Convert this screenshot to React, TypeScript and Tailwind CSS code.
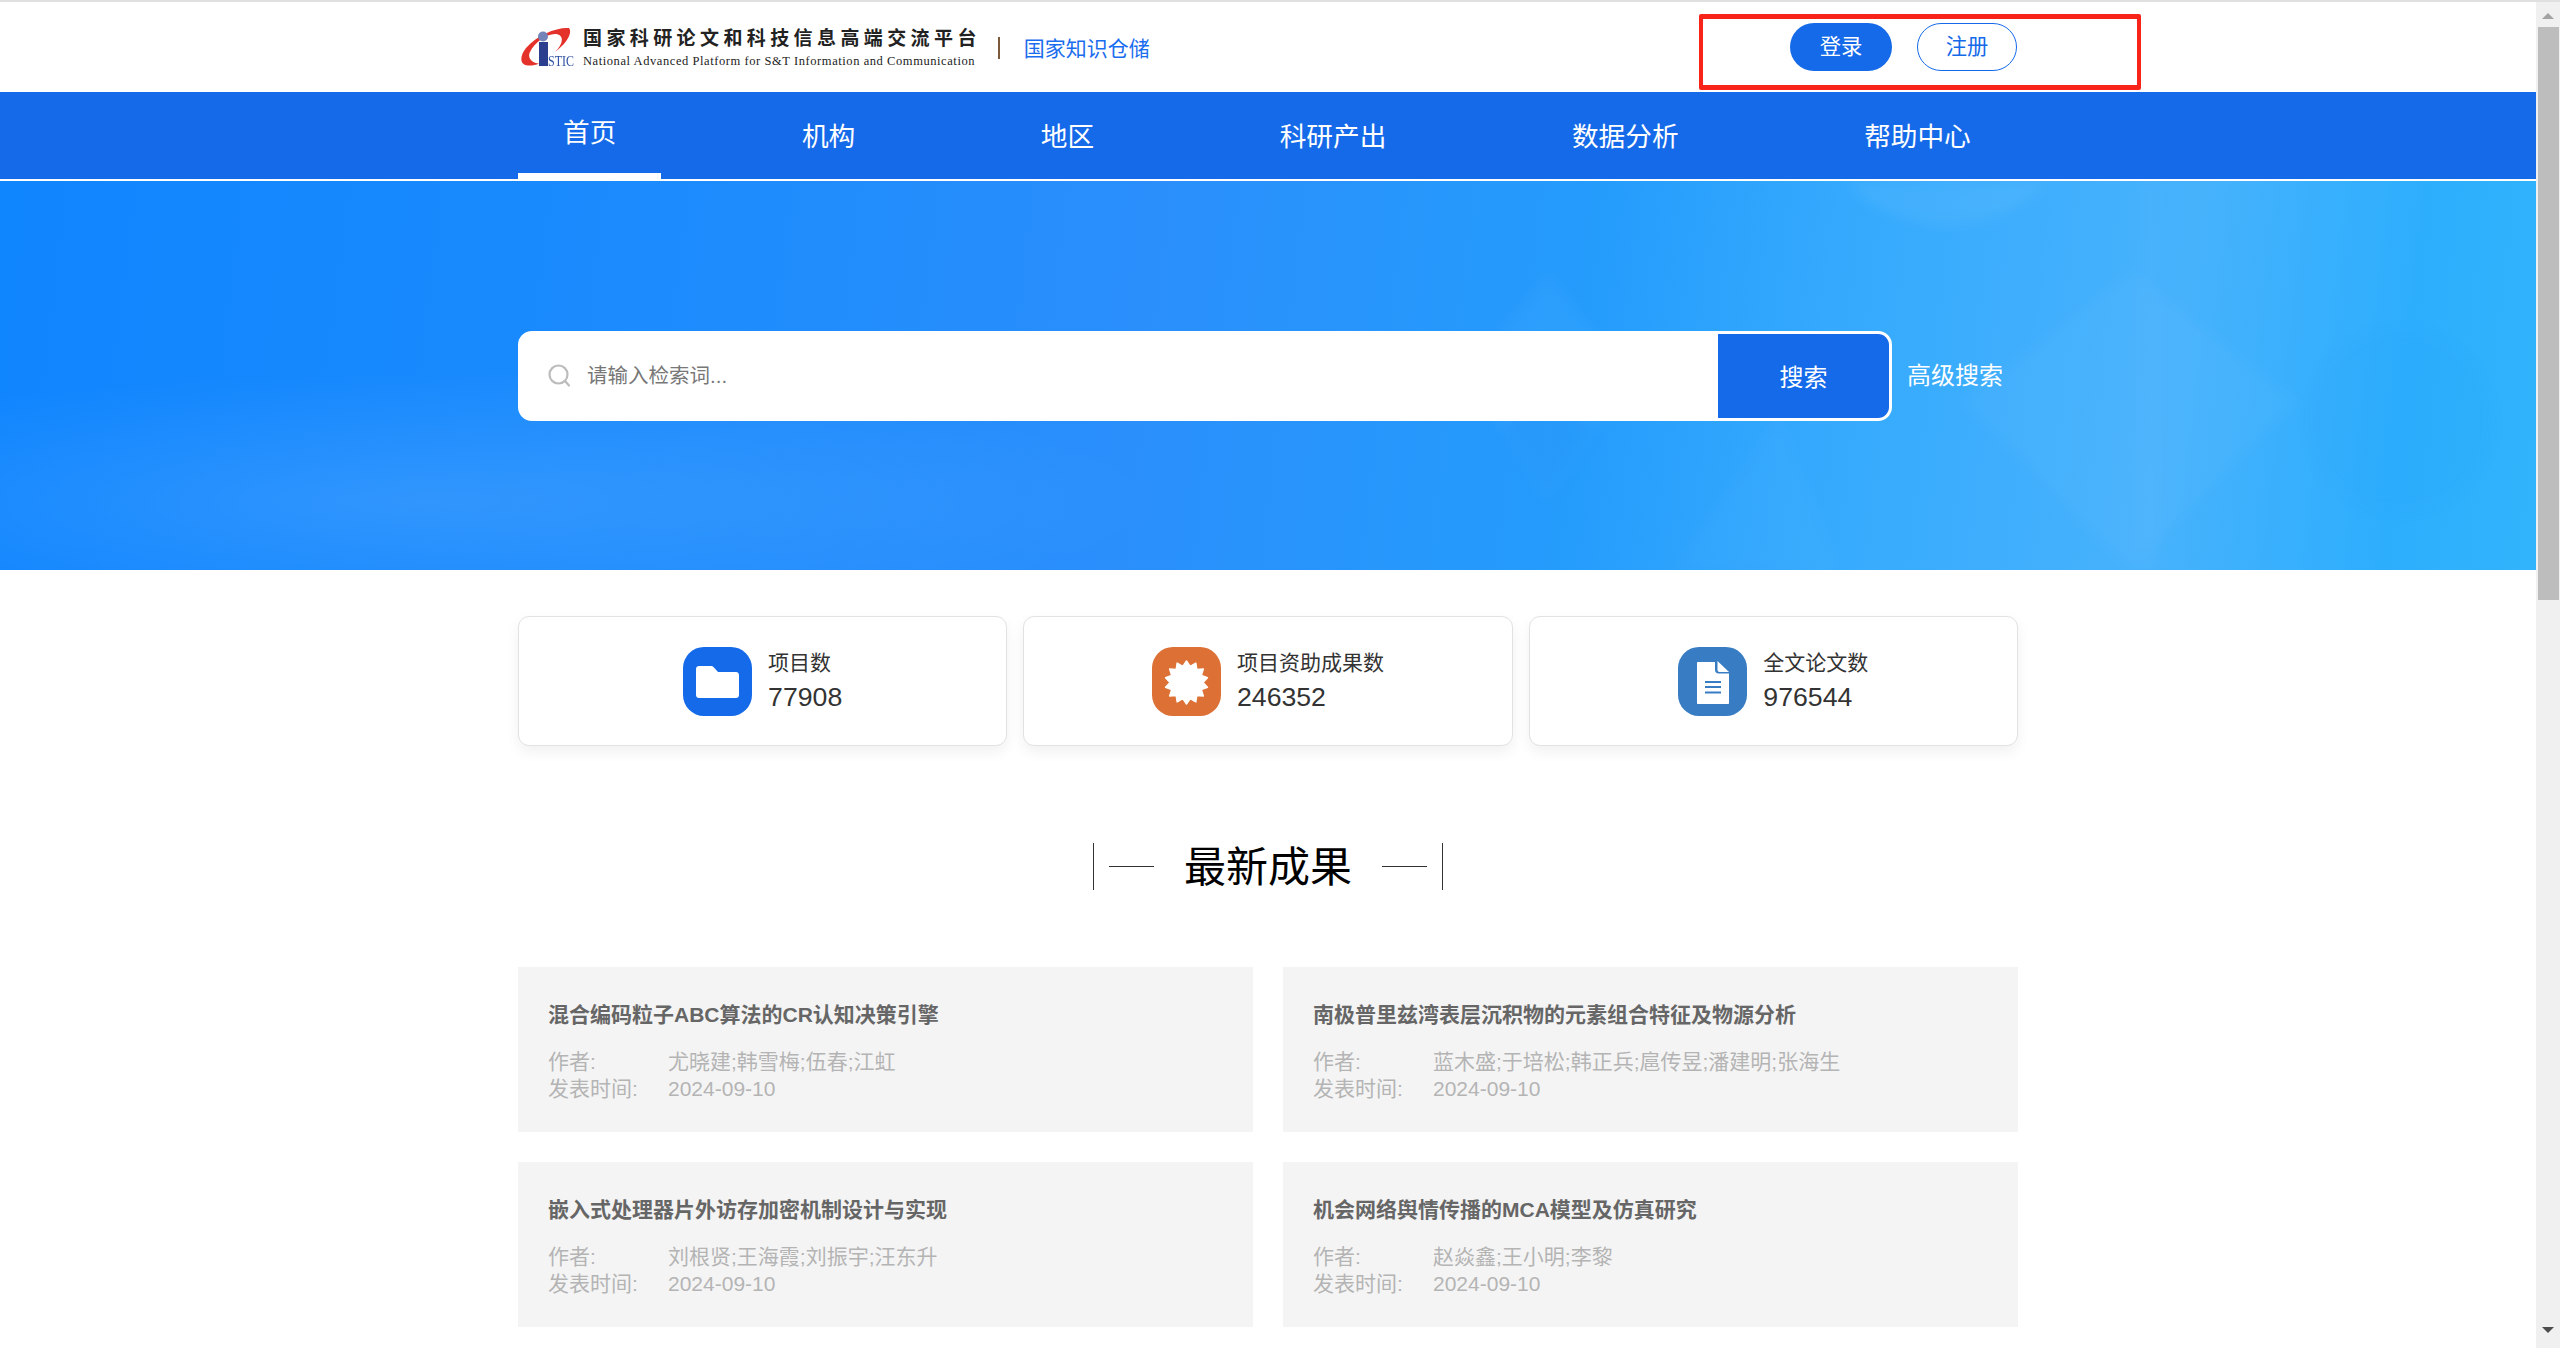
import React from "react";

const NAV = [
  { label: "首页", active: true },
  { label: "机构" },
  { label: "地区" },
  { label: "科研产出" },
  { label: "数据分析" },
  { label: "帮助中心" },
];

const RESULTS = [
  { title: "混合编码粒子ABC算法的CR认知决策引擎", authors: "尤晓建;韩雪梅;伍春;江虹" },
  { title: "南极普里兹湾表层沉积物的元素组合特征及物源分析", authors: "蓝木盛;于培松;韩正兵;扈传昱;潘建明;张海生" },
  { title: "嵌入式处理器片外访存加密机制设计与实现", authors: "刘根贤;王海霞;刘振宇;汪东升" },
  { title: "机会网络舆情传播的MCA模型及仿真研究", authors: "赵焱鑫;王小明;李黎" },
];

function sealPoints() {
  const pts: string[] = [];
  const n = 14;
  for (let i = 0; i < n * 2; i++) {
    const r = i % 2 === 0 ? 21.5 : 16.5;
    const a = (Math.PI * i) / n - Math.PI / 2;
    pts.push(`${(34.5 + r * Math.cos(a)).toFixed(2)},${(35.5 + r * Math.sin(a)).toFixed(2)}`);
  }
  return pts.join(" ");
}

function Logo() {
  return (
    <div className="relative h-[42px] w-[56px] shrink-0">
      <svg width="56" height="42" viewBox="0 0 56 42" className="block">
        <path
          d="M49 1C37 0 17 8 6 21C-1 30 0 38 8 38.500C12 38.700 16 38 19 36.500C12 36 7 31 10 25C15 15 29 5 38 7.500C44 9.500 43 17 35 25C46 17 53 6 49 1Z"
          fill="#e4322b"
        />
        <circle cx="23" cy="9.500" r="5" fill="#7484b8" />
        <rect x="19" y="15" width="9" height="24" fill="#2c3f8f" />
      </svg>
      <span className="absolute left-[28px] top-[27px] origin-left scale-x-[0.8] whitespace-nowrap font-['Liberation_Serif',serif] text-[15px] leading-[15px] text-[#2c4fa3]">
        STIC
      </span>
    </div>
  );
}

function FolderIcon() {
  return (
    <svg width="69" height="69" viewBox="0 0 69 69" className="block">
      <path
        d="M16 19H28C29 19 30 19.500 30.700 20.200L35 25H53C54.700 25 56 26.300 56 28V48C56 49.700 54.700 51 53 51H16C14.300 51 13 49.700 13 48V22C13 20.300 14.300 19 16 19Z"
        fill="#fff"
      />
    </svg>
  );
}

function SealIcon() {
  return (
    <svg width="69" height="69" viewBox="0 0 69 69" className="block">
      <polygon points={sealPoints()} fill="#fff" stroke="#fff" strokeWidth="1.500" strokeLinejoin="round" />
    </svg>
  );
}

function DocIcon() {
  return (
    <svg width="69" height="69" viewBox="0 0 69 69" className="block">
      <path d="M20 15H37V23C37 25 38.500 26.500 40.500 26.500H51V56C51 56.600 50.600 57 50 57H20C19.400 57 19 56.600 19 56V16C19 15.400 19.400 15 20 15Z" fill="#fff" />
      <path d="M39.500 14L51 25H41.500C40.400 25 39.500 24.100 39.500 23Z" fill="#fff" />
      <path d="M27 35H43M27 40H43M27 45.500H43" stroke="#387dc4" strokeWidth="2" />
    </svg>
  );
}

function Stat({ color, icon, label, value }: { color: string; icon: React.ReactNode; label: string; value: string }) {
  return (
    <div className="flex h-[130px] items-center justify-center gap-4 rounded-[11px] border border-[#e2e2e2] bg-white shadow-[0_6px_14px_rgba(0,0,0,0.06)]">
      <div className={`h-[69px] w-[69px] shrink-0 rounded-[21px] ${color}`}>{icon}</div>
      <div className="text-[#333]">
        <div className="text-[21px] leading-[30px]">{label}</div>
        <div className="mt-[1px] text-[26.67px] leading-[36px]">{value}</div>
      </div>
    </div>
  );
}

function Result({ title, authors }: { title: string; authors: string }) {
  return (
    <article className="h-[165px] bg-[#f4f4f4] px-[30px] pt-[33px]">
      <h3 className="text-[21px] font-bold leading-[30px] text-[#666]">{title}</h3>
      <dl className="mt-[18px] grid grid-cols-[120px_1fr] text-[21px] leading-[27px] text-[#b4b4b4]">
        <dt>作者:</dt>
        <dd>{authors}</dd>
        <dt>发表时间:</dt>
        <dd>2024-09-10</dd>
      </dl>
    </article>
  );
}

export default function App() {
  return (
    <div className="flex h-[1348px] flex-col overflow-hidden bg-white font-['Liberation_Sans','Noto_Sans_CJK_SC',sans-serif]">
      <div className="h-[2px] shrink-0 bg-[#e0e0e0]" />
      <div className="flex min-h-0 flex-1">
        <main className="min-w-0 flex-1">
          <header className="relative h-[90px] bg-white">
            <div className="mx-auto flex h-full w-[1500px] items-center">
              <div className="ml-[2px] mt-[2px] flex items-center gap-[7px]">
                <Logo />
                <div className="mt-[-2px]">
                  <div className="whitespace-nowrap text-[19px] font-bold leading-[24px] tracking-[4.4px] text-[#222]">
                    国家科研论文和科技信息高端交流平台
                  </div>
                  <div className="mt-[4px] whitespace-nowrap font-['Liberation_Serif',serif] text-[12.5px] font-normal leading-[13px] tracking-[0.57px] text-[#222]">
                    National Advanced Platform for S&amp;T Information and Communication
                  </div>
                </div>
              </div>
              <div className="ml-[17px] mt-[2px] h-[22px] w-[2px] bg-[#7a5a3a]" />
              <a className="ml-[24px] mt-[4px] whitespace-nowrap text-[21px] text-[#1a6dee]">国家知识仓储</a>
              <div className="ml-auto flex items-center gap-[25px] pr-[1px]">
                <button className="h-[48px] w-[102px] rounded-full bg-[#156ae9] pt-[2px] text-[21.33px] text-white">登录</button>
                <button className="h-[48px] w-[100px] rounded-full border border-[#156ae9] bg-white pt-[2px] text-[21.33px] text-[#156ae9]">注册</button>
              </div>
            </div>
            <div className="pointer-events-none absolute left-[1699px] top-[12px] h-[76px] w-[442px] rounded-[2px] border-x-[4px] border-y-[5px] border-[#f8241a]" />
          </header>

          <nav className="h-[89px] border-b-2 border-white bg-[#156ae9]">
            <ul className="mx-auto flex h-full w-[1500px] gap-[95.6px]">
              {NAV.map((n) => (
                <li
                  key={n.label}
                  className={`flex h-full items-center whitespace-nowrap px-[45px] text-[26.67px] text-white ${n.active ? "border-b-[6px] border-white pt-[1px]" : "pt-[3px]"}`}
                >
                  {n.label}
                </li>
              ))}
            </ul>
          </nav>

          <section className="relative flex h-[389px] items-center overflow-hidden bg-[radial-gradient(ellipse_750px_130px_at_420px_320px,rgba(255,255,255,0.11),transparent),linear-gradient(97deg,#0f85fe_0%,#1b8bfd_25%,#2a8ffb_45%,#249cfc_62%,#35aafd_72%,#47b2fc_85%,#2daefd_94%,#31b4fb_100%)]">
            <svg className="absolute inset-0 h-full w-full blur-[7px]" viewBox="0 0 2536 389" preserveAspectRatio="none" aria-hidden="true">
              <polygon points="1548,90 1630,195 1548,320 1465,195" fill="#fff" opacity="0.035" />
              <polygon points="1548,190 1590,250 1548,310 1505,250" fill="#0f7ff0" opacity="0.15" />
              <circle cx="1947" cy="-95" r="140" fill="#fff" opacity="0.06" />
              <polygon points="2130,90 2300,220 2130,389 1960,220" fill="#fff" opacity="0.03" />
              <polygon points="1670,389 1780,230 1840,389" fill="#fff" opacity="0.025" />
              <rect x="2140" y="0" width="18" height="389" fill="#fff" opacity="0.025" />
              <circle cx="2400" cy="240" r="90" fill="#0f8ff0" opacity="0.05" />
            </svg>
            <div className="relative mx-auto flex w-[1500px] items-center">
              <div className="flex h-[90px] w-[1374px] items-center rounded-[14px] border-[3px] border-white bg-white">
                <svg className="ml-[27px] shrink-0" width="23" height="23" viewBox="0 0 23 23" fill="none" stroke="#bcbcbc" strokeWidth="2.200">
                  <circle cx="10.500" cy="10.500" r="9" />
                  <path d="M17 17L21 21.500" strokeLinecap="round" />
                </svg>
                <input
                  readOnly
                  placeholder="请输入检索词..."
                  className="ml-[16px] h-full min-w-0 flex-1 bg-transparent text-[20.5px] outline-none placeholder:text-[#777]"
                />
                <button className="flex h-full w-[171px] shrink-0 items-center justify-center rounded-r-[11px] bg-[#156ae9] pt-[4px] text-[24px] text-white">
                  搜索
                </button>
              </div>
              <a className="ml-[15px] whitespace-nowrap text-[24px] text-white">高级搜索</a>
            </div>
          </section>

          <div className="mx-auto w-[1500px]">
            <section className="grid grid-cols-3 gap-4 pt-[46px]">
              <Stat color="bg-[#156ae9]" icon={<FolderIcon />} label="项目数" value="77908" />
              <Stat color="bg-[#dc7035]" icon={<SealIcon />} label="项目资助成果数" value="246352" />
              <Stat color="bg-[#387dc4]" icon={<DocIcon />} label="全文论文数" value="976544" />
            </section>

            <div className="mt-[97px] flex h-[47px] items-center justify-center">
              <span className="h-[47px] w-px bg-[#333]" />
              <span className="ml-[15px] h-px w-[45px] bg-[#333]" />
              <h2 className="mx-[30px] whitespace-nowrap pt-[2px] text-[42px] leading-[47px] text-black">最新成果</h2>
              <span className="h-px w-[45px] bg-[#333]" />
              <span className="ml-[15px] h-[47px] w-px bg-[#333]" />
            </div>

            <section className="mt-[77px] grid grid-cols-2 gap-[30px]">
              {RESULTS.map((r) => (
                <Result key={r.title} {...r} />
              ))}
            </section>
          </div>
        </main>

        <aside className="flex w-[24px] shrink-0 flex-col items-center bg-[#f0f0f0]">
          <div className="flex h-[25px] w-full items-center justify-center pt-[2px]">
            <span className="h-0 w-0 border-x-[6px] border-b-[6px] border-x-transparent border-b-[#a3a3a3]" />
          </div>
          <div className="ml-[1px] h-[573px] w-[21px] bg-[#bdbdbd]" />
          <div className="mt-auto flex h-[26px] w-full items-start justify-center pt-[5px]">
            <span className="h-0 w-0 border-x-[6px] border-t-[6px] border-x-transparent border-t-[#4d4d4d]" />
          </div>
        </aside>
      </div>
    </div>
  );
}
